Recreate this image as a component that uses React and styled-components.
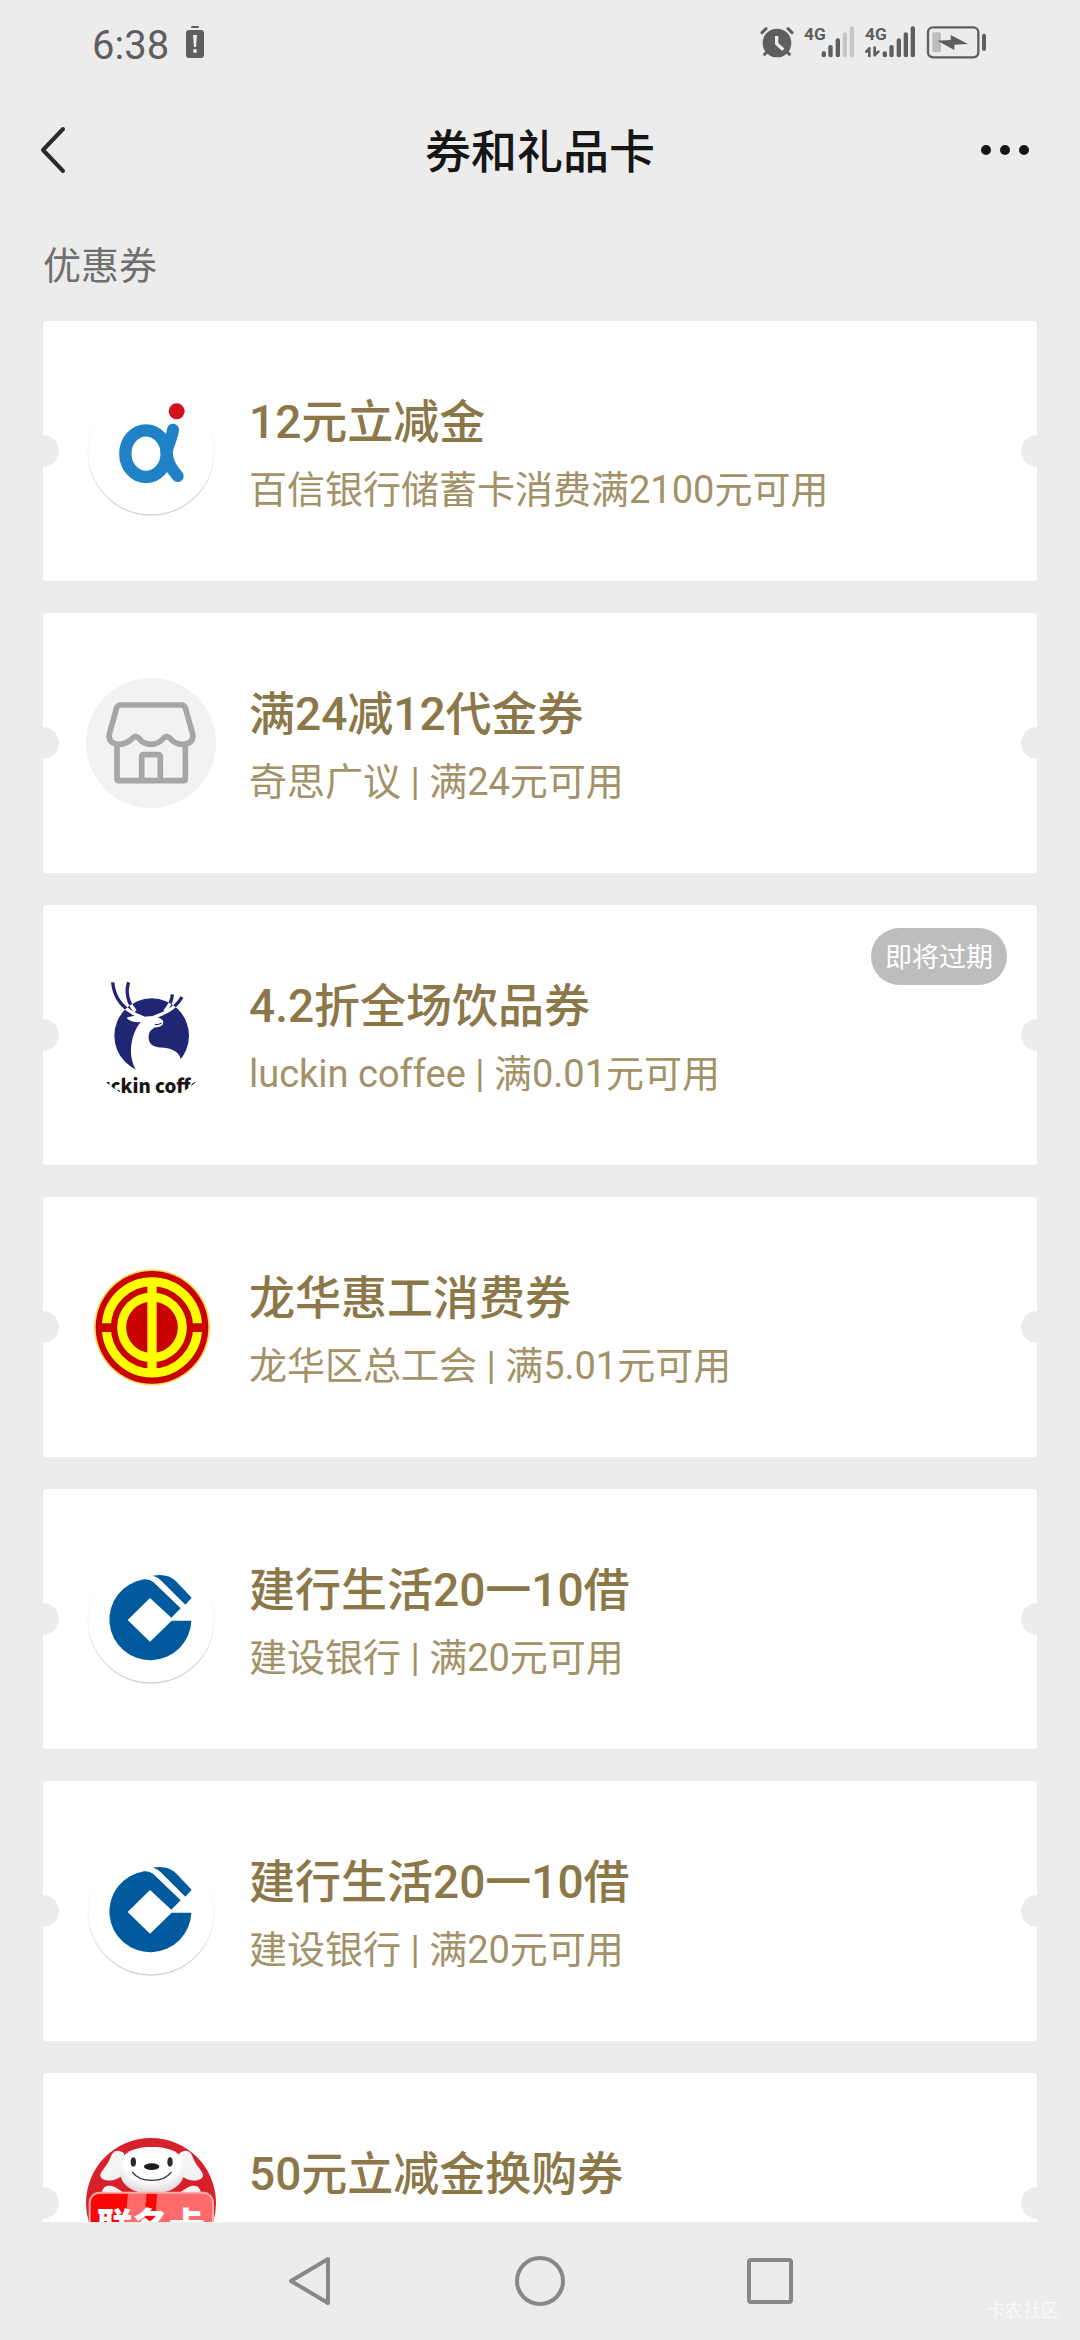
import styled, { createGlobalStyle } from "styled-components";

const GlobalStyle = createGlobalStyle`
  * {
    box-sizing: border-box;
  }
  body {
    margin: 0;
    background: #ececec;
    font-family: Roboto, "Noto Sans CJK SC", sans-serif;
  }
  button {
    padding: 0;
    border: none;
    background: none;
  }
  svg {
    display: block;
  }
`;

const Page = styled.div`
  display: flex;
  flex-direction: column;
  height: 100vh;
  overflow: hidden;
`;

const StatusBar = styled.div`
  display: flex;
  justify-content: space-between;
  height: 84px;
  padding: 0 93px 0 92px;
`;
const StatusGroup = styled.div`
  display: flex;
  align-items: center;
  gap: ${(props) => props.$gap}px;
`;
const Clock = styled.span`
  font-size: 40px;
  line-height: 48px;
  padding-top: 8px;
  color: #5e5e5e;
`;

const Header = styled.header`
  display: grid;
  grid-template-columns: 1fr auto 1fr;
  align-items: center;
  height: 132px;
  padding: 0 40px;
`;
const Title = styled.h1`
  margin: 0;
  padding-top: 4px;
  font-size: 46px;
  font-weight: 500;
  line-height: 68px;
  color: #161616;
`;
const HeaderButton = styled.button`
  justify-self: ${(props) => props.$side};
`;

const Main = styled.main`
  flex: 1;
  min-height: 0;
  overflow: hidden;
  padding: 23px 43px 0;
`;
const SectionTitle = styled.h2`
  margin: 0 0 28px;
  font-size: 38px;
  font-weight: 400;
  line-height: 54px;
  color: #6f6f6f;
`;
const List = styled.ul`
  display: flex;
  flex-direction: column;
  gap: 32px;
  margin: 0;
  padding: 0;
  list-style: none;
`;
const Card = styled.a`
  position: relative;
  display: flex;
  align-items: center;
  gap: 33px;
  height: 260px;
  padding: 0 43px;
  border-radius: 3px;
  overflow: hidden;
  background: #fff;
  text-decoration: none;

  &::before,
  &::after {
    content: "";
    position: absolute;
    top: 114px;
    width: 32px;
    height: 32px;
    border-radius: 50%;
    background: #ececec;
  }
  &::before {
    left: -16px;
  }
  &::after {
    right: -16px;
  }
`;
const CardText = styled.div`
  flex: 1;
  padding-top: 9px;
`;
const CardTitle = styled.h3`
  margin: 0;
  font-size: 46px;
  font-weight: 500;
  line-height: 68px;
  color: #8b7748;
`;
const CardDesc = styled.p`
  margin: 0;
  font-size: 38px;
  line-height: 68px;
  color: #a39167;
`;
const Badge = styled.span`
  position: absolute;
  top: 23px;
  right: 30px;
  padding: 3px 14px 0;
  border-radius: 29px;
  background: #bdbdbd;
  color: #fff;
  font-size: 27px;
  line-height: 54px;
`;

const NavBar = styled.nav`
  position: relative;
  display: flex;
  justify-content: center;
  align-items: center;
  gap: 180px;
  height: 118px;
  background: #ececec;
`;
const Watermark = styled.span`
  position: absolute;
  right: 21px;
  bottom: 16px;
  font-size: 18px;
  line-height: 26px;
  color: #f9f9f9;
`;

const LogoSvg = styled.svg`
  flex: none;
  width: 130px;
  height: 130px;
`;

function LogoRim({ cx, cy, id }) {
  return (
    <>
      <defs>
        <linearGradient id={id} x1="0" y1="0" x2="0" y2="1">
          <stop offset="0.2" stopColor="#fff" />
          <stop offset="0.6" stopColor="#f3f3f3" />
          <stop offset="1" stopColor="#d2d2d2" />
        </linearGradient>
      </defs>
      <circle cx={cx} cy={cy} r="189" fill="#fff" stroke={`url(#${id})`} strokeWidth="4" />
    </>
  );
}

function BaixinLogo() {
  return (
    <LogoSvg viewBox="168 228 390 390" aria-hidden="true">
      <LogoRim cx="363" cy="426" id="rim-baixin" />
      <ellipse cx="348" cy="431" rx="62" ry="70" fill="none" stroke="#1f81c6" strokeWidth="37" />
      <path
        d="M429 359 C426 385 415 400 410 425 C410 455 422 475 443 498"
        fill="none"
        stroke="#1f81c6"
        strokeWidth="36"
        strokeLinecap="round"
      />
      <circle cx="440" cy="304" r="24" fill="#cf1220" />
    </LogoSvg>
  );
}

function ShopLogo() {
  return (
    <LogoSvg viewBox="78 84 390 390" aria-hidden="true">
      <circle cx="273" cy="279" r="195" fill="#f2f2f2" />
      <g fill="none" stroke="#a6a6a6" strokeWidth="17" strokeLinejoin="round" strokeLinecap="round">
        <path d="M182 165 H364 Q373 165 376 173 L398 252 C402 272 388 283 368 283 C348 283 338 275 329 264 Q320 255 311 264 C302 275 290 283 273 283 C256 283 244 275 236 264 Q227 255 218 264 C208 275 198 283 178 283 C158 283 144 272 148 252 L170 173 Q173 165 182 165 Z" />
        <path d="M171 284 V386 Q171 392 177 392 H370 Q376 392 376 386 V284" />
        <path d="M245 390 V321 Q245 314 252 314 H294 Q301 314 301 321 V390" />
      </g>
    </LogoSvg>
  );
}

function Antlers({ color, clip }) {
  return (
    <g fill="none" stroke={color} strokeWidth="10" clipPath={clip}>
      <path d="M158 187 C162 232 188 272 252 294" />
      <path d="M206 187 C196 215 203 248 226 274" />
      <path d="M366 231 C345 268 310 282 275 294" />
      <path d="M337 223 C336 245 328 258 314 274" />
    </g>
  );
}

function LuckinLogo() {
  return (
    <LogoSvg viewBox="78 150 390 390" aria-hidden="true">
      <defs>
        <clipPath id="luckin-disc">
          <circle cx="275" cy="347" r="112" />
        </clipPath>
        <clipPath id="luckin-round">
          <circle cx="273" cy="345" r="195" />
        </clipPath>
      </defs>
      <circle cx="275" cy="347" r="112" fill="#1f2672" />
      <Antlers color="#1f2672" />
      <Antlers color="#fff" clip="url(#luckin-disc)" />
      <path
        d="M200 294 C213 287 235 287 250 291 C265 288 285 288 298 294 C306 298 312 303 309 311 C306 319 298 320 288 322 C273 326 265 338 266 356 C268 376 286 382 312 383 C340 386 360 398 362 419 L362 474 H228 V450 C213 425 210 395 215 368 C220 340 232 318 242 306 C225 308 208 304 200 294 Z"
        fill="#fff"
      />
      <path d="M284 314 Q296 315 305 309" fill="none" stroke="#1f2672" strokeWidth="3" />
      <g clipPath="url(#luckin-round)">
        <text
          x="277"
          y="519"
          textAnchor="middle"
          fontFamily="'Noto Sans CJK SC', sans-serif"
          fontSize="56"
          fontWeight="900"
          fill="#1c1516"
        >
          luckin coffee
        </text>
      </g>
    </LogoSvg>
  );
}

function UnionLogo() {
  return (
    <LogoSvg viewBox="78 66 390 390" aria-hidden="true">
      <circle cx="276" cy="262" r="174" fill="#ffd65a" />
      <circle cx="276" cy="262" r="169" fill="#c90000" />
      <g fill="none" stroke="#ff0" strokeWidth="27">
        <circle cx="276" cy="262" r="137" />
        <circle cx="276" cy="262" r="91" />
      </g>
      <path d="M120 250 H160 V276 H120 Z M392 250 H432 V276 H392 Z" fill="#c90000" />
      <path d="M262 118 H290 V406 H262 Z" fill="#ff0" />
    </LogoSvg>
  );
}

function CcbLogo({ id }) {
  return (
    <LogoSvg viewBox="78 42 390 390" aria-hidden="true">
      <LogoRim cx="273" cy="240" id={id} />
      <path
        d="M394 242 A123 122 0 1 1 252 118 Q268 116 280 126 L362 205 L334 233 L270 174 L203 240 L270 305 L335 242 Z"
        fill="#025a9e"
      />
      <path d="M278 107 Q322 98 348 124 L395 173 L376 194 L304 122 Q293 110 278 107 Z" fill="#025a9e" />
    </LogoSvg>
  );
}

function JdLogo() {
  return (
    <LogoSvg viewBox="168 234 390 390" aria-hidden="true">
      <defs>
        <clipPath id="jd-round">
          <circle cx="363" cy="429" r="195" />
        </clipPath>
        <clipPath id="jd-sign">
          <rect x="179" y="398" width="370" height="180" rx="30" />
        </clipPath>
        <radialGradient id="jd-head" cx="0.5" cy="0.3" r="0.7">
          <stop offset="0.6" stopColor="#fff" />
          <stop offset="1" stopColor="#d9d9dc" />
        </radialGradient>
      </defs>
      <g clipPath="url(#jd-round)">
        <rect x="168" y="234" width="390" height="390" fill="#d8202a" />
        <path
          d="M282 280 C268 268 250 270 243 288 C235 312 222 322 212 340 C206 358 228 364 246 361 C262 358 270 350 280 345 Z"
          fill="#f4f4f5"
        />
        <path
          d="M448 280 C462 268 480 270 487 288 C495 312 508 322 518 340 C524 358 502 364 484 361 C468 358 460 350 450 345 Z"
          fill="#f4f4f5"
        />
        <path d="M216 402 C214 376 240 372 256 382 L288 402 Z M512 402 C514 376 490 372 474 382 L442 402 Z" fill="#f4f4f5" />
        <path
          d="M365 261 C432 261 464 285 465 325 C466 372 425 402 365 402 C305 402 267 372 268 325 C269 285 300 261 365 261 Z"
          fill="url(#jd-head)"
        />
        <ellipse cx="310" cy="306" rx="8" ry="14" fill="#2b2b2b" />
        <ellipse cx="420" cy="306" rx="8" ry="14" fill="#2b2b2b" />
        <ellipse cx="365" cy="320" rx="23" ry="10" fill="#1d1d1d" />
        <path d="M308 337 C330 369 400 369 423 337" fill="none" stroke="#333" strokeWidth="4" strokeLinecap="round" />
        <g clipPath="url(#jd-sign)">
          <rect x="179" y="398" width="370" height="180" fill="#ff6b6b" />
          <path d="M179 398 H294 L278 578 H179 Z M350 398 H382 L366 578 H334 Z" fill="#f80606" />
        </g>
        <rect x="179" y="398" width="370" height="180" rx="30" fill="none" stroke="#ffa9a9" strokeWidth="6" />
        <text
          x="363"
          y="536"
          textAnchor="middle"
          fontFamily="'Noto Sans CJK SC', sans-serif"
          fontSize="108"
          fontWeight="900"
          fill="#fff"
        >
          联名卡
        </text>
      </g>
    </LogoSvg>
  );
}

function BatteryWarnIcon() {
  return (
    <svg width="18" height="32" viewBox="0 0 18 32" aria-hidden="true">
      <rect x="5" y="0" width="8" height="2" rx="1" fill="#5e5e5e" />
      <rect x="0" y="4" width="18" height="28" rx="3" fill="#5e5e5e" />
      <path d="M7 9 H11 L10 21 H8 Z" fill="#ececec" />
      <circle cx="9" cy="25" r="2" fill="#ececec" />
    </svg>
  );
}

function AlarmIcon() {
  return (
    <svg width="34" height="34" viewBox="57 75 102 102" aria-hidden="true">
      <g stroke="#5e5e5e" strokeWidth="9" strokeLinecap="round">
        <path d="M63 98 L75 86 M153 98 L141 86 M71 163 L80 153 M145 163 L136 153" />
      </g>
      <circle cx="108" cy="129" r="43" fill="#5e5e5e" />
      <path d="M107 108 V131 L127 149" fill="none" stroke="#ececec" strokeWidth="10" strokeLinejoin="round" />
    </svg>
  );
}

const bars = [
  { x: 53, y: 154 },
  { x: 73, y: 135 },
  { x: 95, y: 115 },
  { x: 116, y: 97 },
  { x: 137, y: 79 },
];

function SignalIcon({ level, arrows }) {
  return (
    <svg width="51" height="34" viewBox="0 75 153 102" aria-hidden="true">
      <text x="0" y="121" fontFamily="Roboto, sans-serif" fontSize="52" fontWeight="700" fill="#5e5e5e">
        4G
      </text>
      {arrows && (
        <path
          d="M4 155 L13 145 V168 M29 143 V166 L40 155"
          fill="none"
          stroke="#5e5e5e"
          strokeWidth="8"
          strokeLinecap="round"
          strokeLinejoin="round"
        />
      )}
      {bars.map((bar, i) => (
        <rect key={bar.x} x={bar.x} y={bar.y} width="13" height={172 - bar.y} rx="6" fill={i < level ? "#5e5e5e" : "#c6c6c6"} />
      ))}
    </svg>
  );
}

function BatteryIcon() {
  return (
    <svg width="61" height="34" viewBox="558 75 183 102" aria-hidden="true">
      <rect x="564" y="82" width="151" height="90" rx="15" fill="none" stroke="#5e5e5e" strokeWidth="7" />
      <rect x="577" y="97" width="26" height="60" rx="6" fill="#bdbdbd" />
      <path d="M592 122 L632 120 V105 L684 132 L643 134 V150 Z" fill="#5e5e5e" />
      <rect x="726" y="101" width="12" height="52" rx="6" fill="#5e5e5e" />
    </svg>
  );
}

const coupons = [
  { logo: <BaixinLogo />, title: "12元立减金", desc: "百信银行储蓄卡消费满2100元可用" },
  { logo: <ShopLogo />, title: "满24减12代金券", desc: "奇思广议 | 满24元可用" },
  { logo: <LuckinLogo />, title: "4.2折全场饮品券", desc: "luckin coffee | 满0.01元可用", badge: "即将过期" },
  { logo: <UnionLogo />, title: "龙华惠工消费券", desc: "龙华区总工会 | 满5.01元可用" },
  { logo: <CcbLogo id="rim-ccb-1" />, title: "建行生活20一10借", desc: "建设银行 | 满20元可用" },
  { logo: <CcbLogo id="rim-ccb-2" />, title: "建行生活20一10借", desc: "建设银行 | 满20元可用" },
  { logo: <JdLogo />, title: "50元立减金换购券" },
];

export default function App() {
  return (
    <Page>
      <GlobalStyle />
      <StatusBar>
        <StatusGroup $gap={17}>
          <Clock>6:38</Clock>
          <BatteryWarnIcon />
        </StatusGroup>
        <StatusGroup $gap={10}>
          <AlarmIcon />
          <SignalIcon level={3} />
          <SignalIcon level={5} arrows />
          <BatteryIcon />
        </StatusGroup>
      </StatusBar>
      <Header>
        <HeaderButton $side="start" aria-label="返回">
          <svg width="26" height="48" viewBox="0 0 26 48">
            <path d="M23 3 L3 24 L23 45" fill="none" stroke="#2b2b2b" strokeWidth="4" strokeLinejoin="round" strokeLinecap="round" />
          </svg>
        </HeaderButton>
        <Title>券和礼品卡</Title>
        <HeaderButton $side="end" aria-label="更多">
          <svg width="60" height="10" viewBox="0 0 60 10">
            <circle cx="6" cy="5" r="5" fill="#161616" />
            <circle cx="25" cy="5" r="5" fill="#161616" />
            <circle cx="44" cy="5" r="5" fill="#161616" />
          </svg>
        </HeaderButton>
      </Header>
      <Main>
        <SectionTitle>优惠券</SectionTitle>
        <List>
          {coupons.map((coupon, i) => (
            <li key={i}>
              <Card href="#">
                {coupon.logo}
                <CardText>
                  <CardTitle>{coupon.title}</CardTitle>
                  <CardDesc>{coupon.desc || "\u00a0"}</CardDesc>
                </CardText>
                {coupon.badge && <Badge>{coupon.badge}</Badge>}
              </Card>
            </li>
          ))}
        </List>
      </Main>
      <NavBar>
        <button aria-label="后退">
          <svg width="50" height="50" viewBox="0 0 50 50">
            <path d="M43 3 V47 L6 25 Z" fill="none" stroke="#888" strokeWidth="4" strokeLinejoin="round" />
          </svg>
        </button>
        <button aria-label="主页">
          <svg width="50" height="50" viewBox="0 0 50 50">
            <circle cx="25" cy="25" r="23" fill="none" stroke="#888" strokeWidth="4" />
          </svg>
        </button>
        <button aria-label="最近任务">
          <svg width="50" height="50" viewBox="0 0 50 50">
            <rect x="4" y="4" width="42" height="42" rx="2" fill="none" stroke="#888" strokeWidth="4" />
          </svg>
        </button>
        <Watermark>卡农社区</Watermark>
      </NavBar>
    </Page>
  );
}
